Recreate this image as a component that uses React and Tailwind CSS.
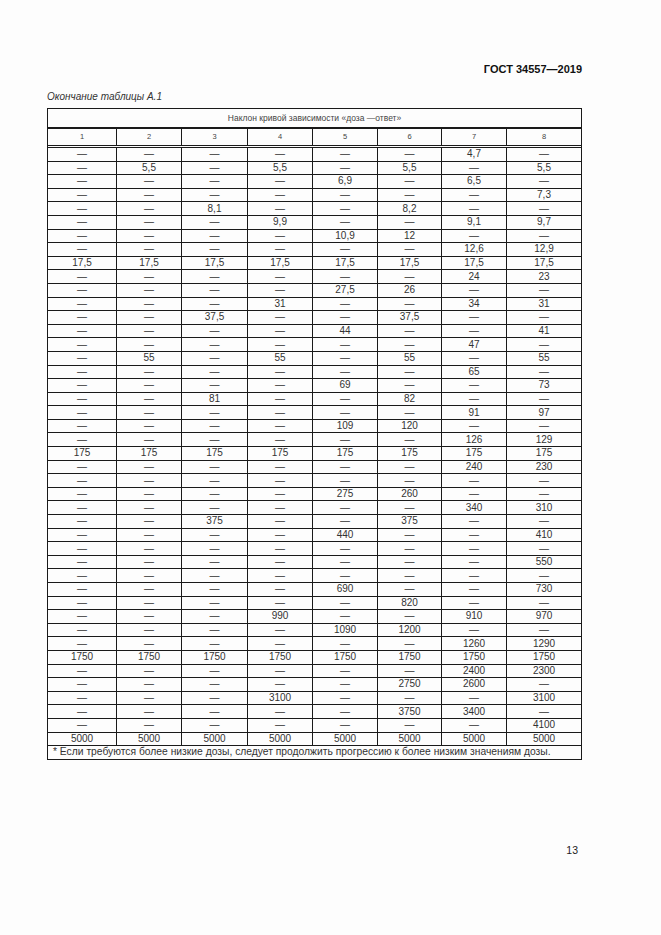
const rows = [
  ["—", "—", "—", "—", "—", "—", "4,7", "—"],
  ["—", "5,5", "—", "5,5", "—", "5,5", "—", "5,5"],
  ["—", "—", "—", "—", "6,9", "—", "6,5", "—"],
  ["—", "—", "—", "—", "—", "—", "—", "7,3"],
  ["—", "—", "8,1", "—", "—", "8,2", "—", "—"],
  ["—", "—", "—", "9,9", "—", "—", "9,1", "9,7"],
  ["—", "—", "—", "—", "10,9", "12", "—", "—"],
  ["—", "—", "—", "—", "—", "—", "12,6", "12,9"],
  ["17,5", "17,5", "17,5", "17,5", "17,5", "17,5", "17,5", "17,5"],
  ["—", "—", "—", "—", "—", "—", "24", "23"],
  ["—", "—", "—", "—", "27,5", "26", "—", "—"],
  ["—", "—", "—", "31", "—", "—", "34", "31"],
  ["—", "—", "37,5", "—", "—", "37,5", "—", "—"],
  ["—", "—", "—", "—", "44", "—", "—", "41"],
  ["—", "—", "—", "—", "—", "—", "47", "—"],
  ["—", "55", "—", "55", "—", "55", "—", "55"],
  ["—", "—", "—", "—", "—", "—", "65", "—"],
  ["—", "—", "—", "—", "69", "—", "—", "73"],
  ["—", "—", "81", "—", "—", "82", "—", "—"],
  ["—", "—", "—", "—", "—", "—", "91", "97"],
  ["—", "—", "—", "—", "109", "120", "—", "—"],
  ["—", "—", "—", "—", "—", "—", "126", "129"],
  ["175", "175", "175", "175", "175", "175", "175", "175"],
  ["—", "—", "—", "—", "—", "—", "240", "230"],
  ["—", "—", "—", "—", "—", "—", "—", "—"],
  ["—", "—", "—", "—", "275", "260", "—", "—"],
  ["—", "—", "—", "—", "—", "—", "340", "310"],
  ["—", "—", "375", "—", "—", "375", "—", "—"],
  ["—", "—", "—", "—", "440", "—", "—", "410"],
  ["—", "—", "—", "—", "—", "—", "—", "—"],
  ["—", "—", "—", "—", "—", "—", "—", "550"],
  ["—", "—", "—", "—", "—", "—", "—", "—"],
  ["—", "—", "—", "—", "690", "—", "—", "730"],
  ["—", "—", "—", "—", "—", "820", "—", "—"],
  ["—", "—", "—", "990", "—", "—", "910", "970"],
  ["—", "—", "—", "—", "1090", "1200", "—", "—"],
  ["—", "—", "—", "—", "—", "—", "1260", "1290"],
  ["1750", "1750", "1750", "1750", "1750", "1750", "1750", "1750"],
  ["—", "—", "—", "—", "—", "—", "2400", "2300"],
  ["—", "—", "—", "—", "—", "2750", "2600", "—"],
  ["—", "—", "—", "3100", "—", "—", "—", "3100"],
  ["—", "—", "—", "—", "—", "3750", "3400", "—"],
  ["—", "—", "—", "—", "—", "—", "—", "4100"],
  ["5000", "5000", "5000", "5000", "5000", "5000", "5000", "5000"],
];

const cols = "grid grid-cols-[69px_65px_66px_65px_65px_64px_65px_74px]";

const App = () => {
  return (
    <div className="w-[661px] h-[935px] bg-[#fdfdfd] text-[#222] font-['Liberation_Sans',Arial,sans-serif] pt-[62px] pl-[47px] pr-[79px]">
      <div className="text-right text-[11px] font-bold leading-[14px] text-[#111]">ГОСТ 34557—2019</div>
      <div className="mt-[14px] italic text-[10px] leading-[14px] text-[#333]">Окончание таблицы А.1</div>

      <div className="mt-[4px] border border-[#1a1a1a]">
        <div className="h-[20px] flex items-center justify-center text-[8.5px] text-[#444] border-b-2 border-[#1a1a1a]">
          Наклон кривой зависимости «доза —ответ»
        </div>
        <div className={cols + " h-[19px] border-b-[3px] border-double border-[#1a1a1a]"}>
          {[1, 2, 3, 4, 5, 6, 7, 8].map((n) => (
            <div key={n} className="flex items-center justify-center text-[7.5px] text-[#444] border-r border-[#1a1a1a] last:border-r-0">
              {n}
            </div>
          ))}
        </div>
        {rows.map((r, i) => (
          <div key={i} className={cols + " h-[13.6px] border-b border-[#1a1a1a]"}>
            {r.map((v, j) => (
              <div key={j} className="flex items-center justify-center text-[10px] leading-none text-[#333] border-r border-[#1a1a1a] last:border-r-0">
                {v}
              </div>
            ))}
          </div>
        ))}
        <div className="h-[13px] flex items-center pl-[5px] text-[10.3px] leading-none text-[#333]">
          * Если требуются более низкие дозы, следует продолжить прогрессию к более низким значениям дозы.
        </div>
      </div>

      <div className="mt-[84px] pr-[4px] text-right text-[10.5px] leading-[12px] text-[#222]">13</div>
    </div>
  );
};

export default App;
